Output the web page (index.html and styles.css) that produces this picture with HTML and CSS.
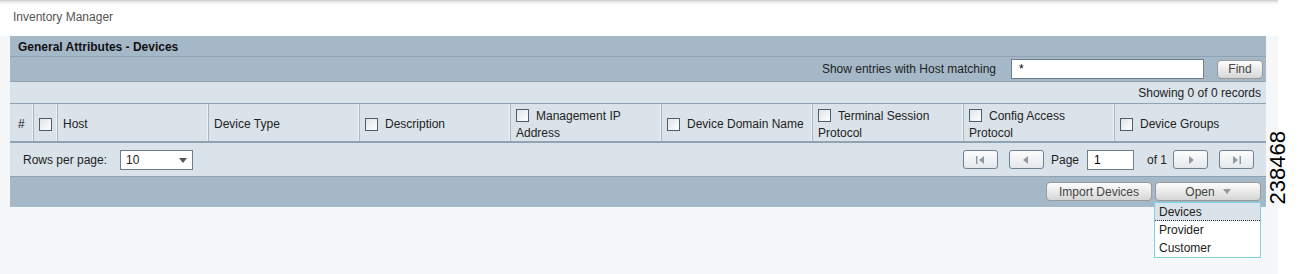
FILE: index.html
```html
<!DOCTYPE html>
<html lang="en">
<head>
    <meta charset="UTF-8">
    <title>Inventory Manager</title>
    <link rel="stylesheet" href="styles.css">
</head>
<body>
    <div class="frame">
        <div class="main">
            <div class="title">Inventory Manager</div>
            <section class="panel">
                <div class="panel-head">General Attributes - Devices</div>
                <div class="search-row">
                    <span>Show entries with Host matching</span>
                    <input type="text" class="search-input" value="*">
                    <a href="###" class="btn find">Find</a>
                </div>
                <div class="records-row">Showing 0 of 0 records</div>
                <div class="grid-head">
                    <div class="col col-num">#</div>
                    <div class="col col-cb"><span class="cb"></span></div>
                    <div class="col">Host</div>
                    <div class="col">Device Type</div>
                    <div class="col"><span class="cb"></span>Description</div>
                    <div class="col two"><span class="cb"></span>Management IP<br>Address</div>
                    <div class="col"><span class="cb"></span>Device Domain Name</div>
                    <div class="col two"><span class="cb"></span>Terminal Session<br>Protocol</div>
                    <div class="col two"><span class="cb"></span>Config Access<br>Protocol</div>
                    <div class="col last"><span class="cb"></span>Device Groups</div>
                </div>
                <div class="pager-row">
                    <div class="rows-per">
                        <span>Rows per page:</span>
                        <div class="select">10<i class="caret"></i></div>
                    </div>
                    <div class="pager">
                        <a href="###" class="pbtn"><svg width="10" height="8" viewBox="0 0 10 8"><rect x="1" y="0" width="1.5" height="8" fill="#8e9aa5"/><path d="M9 0 L4 4 L9 8 Z" fill="#8e9aa5"/></svg></a>
                        <a href="###" class="pbtn"><svg width="10" height="8" viewBox="0 0 10 8"><path d="M7 0 L2 4 L7 8 Z" fill="#8e9aa5"/></svg></a>
                        <span class="plabel">Page</span>
                        <input type="text" class="page-input" value="1">
                        <span class="plabel of">of 1</span>
                        <a href="###" class="pbtn"><svg width="10" height="8" viewBox="0 0 10 8"><path d="M3 0 L8 4 L3 8 Z" fill="#8e9aa5"/></svg></a>
                        <a href="###" class="pbtn"><svg width="10" height="8" viewBox="0 0 10 8"><path d="M1 0 L6 4 L1 8 Z" fill="#8e9aa5"/><rect x="7.5" y="0" width="1.5" height="8" fill="#8e9aa5"/></svg></a>
                    </div>
                </div>
                <div class="action-row">
                    <a href="###" class="btn import">Import Devices</a>
                    <div class="open-wrap">
                        <a href="###" class="btn open">Open<i class="caret light"></i></a>
                        <ul class="menu">
                            <li class="active">Devices</li>
                            <li>Provider</li>
                            <li>Customer</li>
                        </ul>
                    </div>
                </div>
            </section>
        </div>
        <div class="side"><span class="fig">238468</span></div>
    </div>
</body>
</html>
```
FILE: styles.css
```css
*{padding: 0;margin: 0;list-style: none;box-sizing: border-box;}
body{width: 1306px;height: 274px;background: #fff;font-family: "Liberation Sans", Arial, sans-serif;font-size: 12px;color: #222;overflow: hidden;}
.frame{display: flex;height: 274px;}
.main{width: 1278px;height: 274px;background: linear-gradient(#c8c8c8 0, #ececec 2px, #fff 5px, #fff 36px, #f5f7f9 36px);}
.title{height: 36px;padding: 10px 0 0 13px;color: #555;font-size: 12px;}
.panel{width: 1256px;margin-left: 10px;background: #a5b8c8;position: relative;}
.panel-head{height: 21px;padding: 4px 0 0 8px;font-weight: 700;color: #111;border-bottom: 1px solid #8fa3b4;}
.search-row{height: 25px;display: flex;align-items: center;justify-content: flex-end;padding-right: 3px;border-bottom: 1px solid #8fa3b4;}
.search-row span{margin-right: 15px;color: #222;}
.search-input{width: 193px;height: 20px;border: 1px solid #6e7e8c;background: #fff;font: 12px "Liberation Sans", Arial, sans-serif;padding: 0 0 0 7px;margin-right: 13px;}
.btn{display: inline-flex;align-items: center;justify-content: center;height: 19px;border: 1px solid #9a9a9a;border-radius: 4px;background: linear-gradient(#fdfdfd, #e6e6e6 60%, #d6d6d6);color: #444;text-decoration: none;font-size: 12px;}
.find{width: 46px;}
.records-row{height: 22px;background: #dae3ea;border-bottom: 1px solid #8fa3b4;text-align: right;padding: 4px 5px 0 0;color: #222;}
.grid-head{display: flex;height: 39px;background: #dae3ea;border-bottom: 2px solid #8fa3b4;}
.col{width: 151px;display: flex;align-items: center;padding: 3px 0 0 5px;border-right: 1px solid #a9b6c1;box-shadow: inset -1px 0 0 #eef2f5;color: #222;line-height: 17px;}
.col.two{display: block;padding-top: 4px;}
.col.two .cb{vertical-align: -2px;}
.col.last{border-right: 0;box-shadow: none;}
.col-num{width: 24px;padding-left: 8px;}
.col-cb{width: 24px;padding-left: 5px;}
.cb{display: inline-block;width: 13px;height: 13px;border: 1px solid #4f5d6a;background: linear-gradient(135deg, #dfe4e8, #fff);margin-right: 7px;flex: none;}
.pager-row{height: 34px;background: #dae3ea;border-bottom: 1px solid #8fa3b4;display: flex;align-items: center;justify-content: space-between;padding: 0 12px 0 13px;}
.rows-per{display: flex;align-items: center;}
.rows-per span{margin-right: 13px;}
.select{position: relative;width: 73px;height: 20px;border: 1px solid #6e7e8c;background: #fff;padding: 2px 0 0 5px;}
.caret{position: absolute;right: 5px;top: 7px;width: 0;height: 0;border-left: 4px solid transparent;border-right: 4px solid transparent;border-top: 5px solid #555;}
.caret.light{position: static;display: inline-block;margin-left: 8px;border-top-color: #999;vertical-align: 1px;}
.pager{display: flex;align-items: center;}
.pbtn{display: flex;align-items: center;justify-content: center;width: 35px;height: 19px;border: 1px solid #6f8292;border-radius: 3px;background: linear-gradient(#fdfdfd, #e4e8ec);margin-left: 11px;}
.pbtn:first-child{margin-left: 0;}
.plabel{margin-left: 7px;}
.plabel.of{margin-left: 13px;margin-right: -5px;}
.page-input{width: 47px;height: 20px;border: 1px solid #6e7e8c;background: #fff;font: 12px "Liberation Sans", Arial, sans-serif;padding-left: 6px;margin-left: 8px;}
.action-row{height: 30px;display: flex;justify-content: flex-end;align-items: flex-start;padding: 5px 5px 0 0;}
.import{width: 106px;margin-right: 3px;}
.open-wrap{position: relative;}
.open{width: 106px;}
.menu{position: absolute;left: -1px;top: 20px;width: 107px;border: 1px solid #7fd2e4;background: #fff;z-index: 10;}
.menu li{height: 18px;padding: 2px 0 0 4px;color: #222;}
.menu li.active{background: #dbe3ea;border-bottom: 1px dotted #333;}
.side{flex: 1;margin-left: -12px;display: flex;align-items: center;justify-content: flex-start;padding: 62px 0 0 1px;height: 274px;}
.fig{writing-mode: vertical-rl;transform: rotate(180deg);font-size: 22px;color: #000;line-height: 22px;}
```
